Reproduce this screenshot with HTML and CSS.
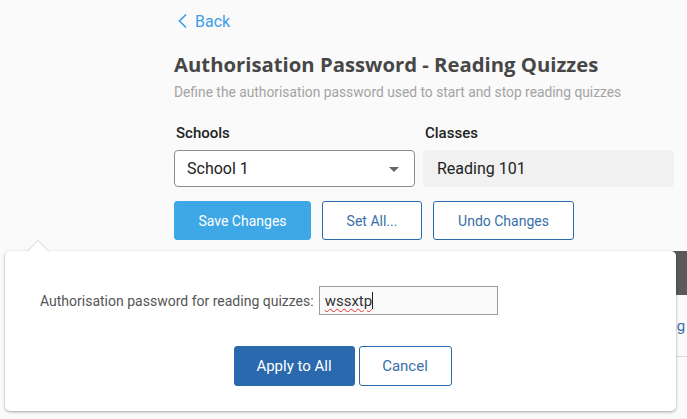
FILE: index.html
```html
<!DOCTYPE html>
<html>
<head>
<meta charset="utf-8">
<link rel="stylesheet" href="styles.css">
</head>
<body>
<div class="page">
  <a class="back" href="#"><svg width="12" height="16" viewBox="0 0 12 16"><path d="M9 1.5 L2.5 8 L9 14.5" fill="none" stroke="#3d9ee6" stroke-width="1.6"/></svg>Back</a>
  <h1 class="title">Authorisation Password - Reading Quizzes</h1>
  <p class="subtitle">Define the authorisation password used to start and stop reading quizzes</p>
  <div class="fields">
    <div class="field schools">
      <div class="label">Schools</div>
      <div class="select">School 1<span class="caret"></span></div>
    </div>
    <div class="field classes">
      <div class="label">Classes</div>
      <div class="readonly">Reading 101</div>
    </div>
  </div>
  <div class="actions">
    <button class="btn primary save">Save Changes</button>
    <button class="btn outline setall">Set All...</button>
    <button class="btn outline undo">Undo Changes</button>
  </div>
  <div class="table">
    <div class="thead"></div>
    <div class="trow"><span class="cell">Reading</span></div>
  </div>
</div>

<div class="popover">
  <div class="pop-row">
    <label class="pop-label">Authorisation password for reading quizzes:</label>
    <div class="pop-input"><span class="typed">wssxtp</span><span class="cursor"></span></div>
  </div>
  <div class="pop-actions">
    <button class="btn dark apply">Apply to All</button>
    <button class="btn outline cancel">Cancel</button>
  </div>
</div>
</body>
</html>
```

FILE: styles.css
```css
html, body {
  margin: 0;
  padding: 0;
  background: #fafafa;
  font-family: Roboto, "Liberation Sans", sans-serif;
  overflow: hidden;
  width: 687px;
  height: 419px;
}

.page {
  padding-left: 174px;
  padding-top: 11px;
  width: 513px;
}

.back {
  display: inline-flex;
  align-items: center;
  gap: 6px;
  color: #3d9ee6;
  text-decoration: none;
  font-size: 16px;
  margin-left: 3px;
  height: 20px;
}

.title {
  margin: 17px 0 0 0;
  font-family: "Open Sans", sans-serif;
  font-weight: 700;
  font-size: 20.3px;
  line-height: 28px;
  color: #474747;
  white-space: nowrap;
}

.subtitle {
  margin: 5px 0 0 0;
  font-size: 13.8px;
  line-height: 18px;
  color: #a3a3a3;
  white-space: nowrap;
}

.fields {
  display: flex;
  gap: 8px;
  margin-top: 22px;
}

.field .label {
  font-size: 15px;
  font-weight: 500;
  color: #222;
  line-height: 20px;
  margin-left: 2px;
  margin-bottom: 7px;
}

.select {
  width: 241px;
  height: 37px;
  box-sizing: border-box;
  border: 1px solid #8d8d8d;
  border-radius: 4px;
  background: #fff;
  display: flex;
  align-items: center;
  padding-left: 12px;
  font-size: 16px;
  color: #222;
  position: relative;
}

.caret {
  position: absolute;
  right: 15px;
  top: 16px;
  width: 0;
  height: 0;
  border-left: 5px solid transparent;
  border-right: 5px solid transparent;
  border-top: 5px solid #666;
}

.readonly {
  width: 251px;
  height: 37px;
  box-sizing: border-box;
  border-radius: 4px;
  background: #f1f1f1;
  display: flex;
  align-items: center;
  padding-left: 14px;
  font-size: 16px;
  color: #222;
}

.actions {
  display: flex;
  gap: 11px;
  margin-top: 14px;
}

.btn {
  font-family: Roboto, "Liberation Sans", sans-serif;
  font-size: 14px;
  height: 39px;
  box-sizing: border-box;
  border-radius: 3px;
  cursor: pointer;
  padding: 0;
}

.primary {
  background: #3ea8e6;
  border: 1px solid #3ea8e6;
  color: #fff;
}

.outline {
  background: #fff;
  border: 1px solid #2d6aac;
  color: #3a6ea8;
}

.dark {
  background: #2a69ad;
  border: 1px solid #2a69ad;
  color: #fff;
  font-size: 15px;
}

.save { width: 137px; }
.setall { width: 100px; }
.undo { width: 141px; }

.table {
  margin-top: 11px;
  width: 513px;
}

.thead {
  height: 44px;
  background: #5a5a5a;
}

.trow {
  height: 61px;
  border-bottom: 1px solid #ddd;
  display: flex;
  align-items: center;
  padding-left: 457px;
}

.cell {
  font-size: 15px;
  color: #3a6ea8;
  white-space: nowrap;
}

.popover {
  position: absolute;
  left: 5px;
  top: 251px;
  width: 671px;
  height: 160px;
  box-sizing: border-box;
  background: #fff;
  border-radius: 5px;
  box-shadow: 0 1px 3px rgba(0,0,0,0.35);
  padding: 35px 0 0 35px;
}

.popover::before {
  content: "";
  position: absolute;
  left: 25px;
  top: -8px;
  width: 15px;
  height: 15px;
  background: #fff;
  border-left: 1px solid #ddd;
  border-top: 1px solid #ddd;
  transform: rotate(45deg);
}

.pop-row {
  display: flex;
  align-items: center;
  gap: 5px;
}

.pop-label {
  font-size: 14px;
  color: #555;
}

.pop-input {
  width: 179px;
  height: 29px;
  box-sizing: border-box;
  border: 1px solid #9b9b9b;
  background: #fafafa;
  display: flex;
  align-items: center;
  padding-left: 5px;
  font-size: 15px;
  color: #333;
}

.typed {
  text-decoration: underline wavy #e0312f;
  text-decoration-thickness: 1px;
  text-underline-offset: 2px;
}

.cursor {
  display: inline-block;
  width: 1px;
  height: 17px;
  background: #222;
}

.pop-actions {
  display: flex;
  justify-content: center;
  gap: 4px;
  margin-top: 31px;
  padding-right: 31px;
}

.apply { width: 121px; height: 40px; border-radius: 3px; }
.cancel { width: 93px; height: 40px; font-size: 15px; }
```
